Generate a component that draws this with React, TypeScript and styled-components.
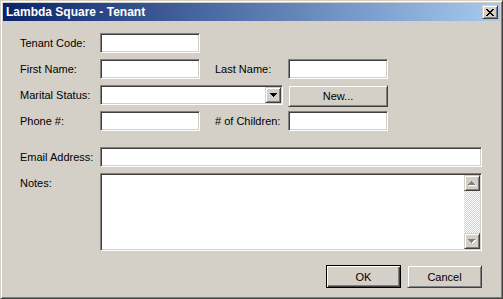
import React from "react";
import styled, { createGlobalStyle } from "styled-components";

const GlobalStyle = createGlobalStyle`
  html, body {
    margin: 0;
    padding: 0;
    background: #d4d0c8;
  }
  * { box-sizing: border-box; }
`;

const face = "#d4d0c8";
const shadow = "#808080";
const dark = "#404040";

const Window = styled.div`
  width: 503px;
  height: 299px;
  background: ${face};
  border: 1px solid;
  border-color: ${face} ${dark} ${dark} ${face};
  box-shadow: inset 1px 1px #fff, inset -1px -1px ${shadow};
  padding: 2px;
  display: flex;
  flex-direction: column;
  font-family: "Liberation Sans", Arial, sans-serif;
  font-size: 11px;
  color: #000;
`;

const TitleBar = styled.div`
  height: 18px;
  flex: none;
  display: flex;
  align-items: center;
  padding: 0 2px 0 3px;
  background: linear-gradient(to right, #0a246a, #a6caf0);
`;

const Title = styled.span`
  color: #fff;
  font-weight: bold;
  font-size: 12px;
`;

const raised = `
  background: ${face};
  border: 1px solid;
  border-color: ${face} ${dark} ${dark} ${face};
  box-shadow: inset 1px 1px #fff, inset -1px -1px ${shadow};
`;

const sunken = `
  background: #fff;
  border: 1px solid;
  border-color: ${shadow} #fff #fff ${shadow};
  box-shadow: inset 1px 1px ${dark}, inset -1px -1px ${face};
`;

const CloseButton = styled.div`
  ${raised}
  margin-left: auto;
  width: 16px;
  height: 14px;
  display: flex;
  align-items: center;
  justify-content: center;
`;

const Body = styled.div`
  padding: 12px 18px 0 17px;
  display: flex;
  flex-direction: column;
`;

const TopGrid = styled.div`
  display: grid;
  grid-template-columns: 80px 100px 15px 73px 100px;
  grid-auto-rows: 20px;
  row-gap: 6px;
`;

const BottomGrid = styled.div`
  margin-top: 16px;
  display: grid;
  grid-template-columns: 80px 1fr;
  grid-template-rows: 20px 78px;
  row-gap: 6px;
`;

const Label = styled.label<{ $col?: number; $top?: boolean }>`
  grid-column: ${(p) => p.$col ?? 1};
  display: flex;
  align-items: ${(p) => (p.$top ? "flex-start" : "center")};
  padding-top: ${(p) => (p.$top ? "4px" : "0")};
  white-space: nowrap;
`;

const Field = styled.input<{ $col?: number }>`
  ${sunken}
  grid-column: ${(p) => p.$col ?? 2};
  height: 20px;
  width: 100%;
  padding: 2px 3px;
  font: inherit;
  outline: none;
`;

const Combo = styled.div`
  ${sunken}
  grid-column: 2 / 5;
  margin-right: 5px;
  display: flex;
  justify-content: flex-end;
  padding: 1px;
`;

const DropButton = styled.div`
  ${raised}
  width: 16px;
  height: 16px;
  display: flex;
  align-items: center;
  justify-content: center;
`;

const Button = styled.button<{ $default?: boolean }>`
  ${raised}
  font: inherit;
  color: #000;
  width: 75px;
  height: 23px;
  padding: 0;
  cursor: default;
  ${(p) =>
    p.$default &&
    `
    border-color: #000;
    box-shadow: inset 1px 1px #fff, inset -1px -1px ${dark}, inset -2px -2px ${shadow};
  `}
`;

const NewButton = styled(Button)`
  grid-column: 5;
  width: 100px;
  height: 22px;
`;

const NotesBox = styled.div`
  ${sunken}
  display: flex;
  padding: 1px;
`;

const NotesText = styled.textarea`
  flex: 1;
  border: none;
  resize: none;
  outline: none;
  font: inherit;
  overflow: hidden;
`;

const ScrollBar = styled.div`
  width: 16px;
  display: flex;
  flex-direction: column;
  justify-content: space-between;
  background: repeating-conic-gradient(#fff 0 25%, ${face} 0 50%) 0 0 / 2px 2px;
`;

const ScrollButton = styled.div`
  ${raised}
  width: 16px;
  height: 16px;
  display: flex;
  align-items: center;
  justify-content: center;
`;

const ArrowStack = styled.div`
  position: relative;
  width: 8px;
  height: 5px;
`;

const ArrowLayer = styled.div<{ $offset: number }>`
  position: absolute;
  left: ${(p) => p.$offset}px;
  top: ${(p) => p.$offset}px;
`;

const ButtonRow = styled.div`
  margin-top: 14px;
  display: flex;
  justify-content: flex-end;
  gap: 6px;
`;

const Pixels: React.FC<{ rows: [number, number][]; fill: string; w: number }> = ({ rows, fill, w }) => (
  <svg width={w} height={rows.length} shapeRendering="crispEdges" style={{ display: "block" }}>
    {rows.map(([x, len], i) => (
      <rect key={i} x={x} y={i} width={len} height={1} fill={fill} />
    ))}
  </svg>
);

const CloseGlyph = () => (
  <svg width={8} height={7} shapeRendering="crispEdges" style={{ display: "block" }}>
    {[
      [0, 6],
      [1, 5],
      [2, 4],
    ].map(([a, b], i) => (
      <g key={i}>
        <rect x={a} y={i} width={2} height={1} fill="#000" />
        <rect x={b} y={i} width={2} height={1} fill="#000" />
        <rect x={a} y={6 - i} width={2} height={1} fill="#000" />
        <rect x={b} y={6 - i} width={2} height={1} fill="#000" />
      </g>
    ))}
    <rect x={3} y={3} width={2} height={1} fill="#000" />
  </svg>
);

const down: [number, number][] = [
  [0, 7],
  [1, 5],
  [2, 3],
  [3, 1],
];
const up: [number, number][] = [...down].reverse();

// disabled arrow: grey glyph with a white emboss one pixel down-right
const GreyArrow: React.FC<{ dir: "up" | "down" }> = ({ dir }) => (
  <ArrowStack>
    <ArrowLayer $offset={1}>
      <Pixels rows={dir === "up" ? up : down} fill="#fff" w={7} />
    </ArrowLayer>
    <ArrowLayer $offset={0}>
      <Pixels rows={dir === "up" ? up : down} fill={shadow} w={7} />
    </ArrowLayer>
  </ArrowStack>
);

export default function App() {
  return (
    <>
      <GlobalStyle />
      <Window>
        <TitleBar>
          <Title>Lambda Square - Tenant</Title>
          <CloseButton>
            <CloseGlyph />
          </CloseButton>
        </TitleBar>
        <Body>
          <TopGrid>
            <Label>Tenant Code:</Label>
            <Field />

            <Label>First Name:</Label>
            <Field />
            <Label $col={4}>Last Name:</Label>
            <Field $col={5} />

            <Label>Marital Status:</Label>
            <Combo>
              <DropButton>
                <Pixels rows={down} fill="#000" w={7} />
              </DropButton>
            </Combo>
            <NewButton>New...</NewButton>

            <Label>Phone #:</Label>
            <Field />
            <Label $col={4}># of Children:</Label>
            <Field $col={5} />
          </TopGrid>
          <BottomGrid>
            <Label>Email Address:</Label>
            <Field />
            <Label $top>Notes:</Label>
            <NotesBox>
              <NotesText />
              <ScrollBar>
                <ScrollButton>
                  <GreyArrow dir="up" />
                </ScrollButton>
                <ScrollButton>
                  <GreyArrow dir="down" />
                </ScrollButton>
              </ScrollBar>
            </NotesBox>
          </BottomGrid>
          <ButtonRow>
            <Button $default>OK</Button>
            <Button>Cancel</Button>
          </ButtonRow>
        </Body>
      </Window>
    </>
  );
}
